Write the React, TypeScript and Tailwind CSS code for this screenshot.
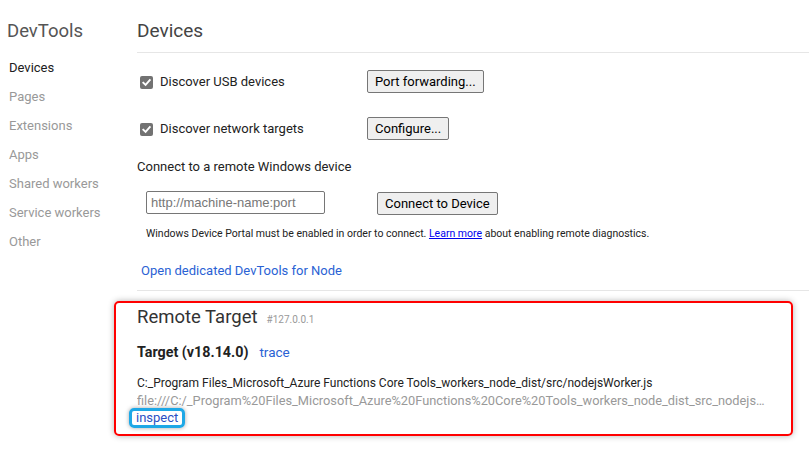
import React from "react";

const font = "font-['Segoe_UI',Roboto,sans-serif]";

function Check() {
  return (
    <span className="w-[13px] h-[13px] rounded-[2px] bg-[#727272] flex items-center justify-center shrink-0">
      <svg width="11" height="11" viewBox="0 0 12 12">
        <path d="M2.5 6.2 L5 8.6 L9.6 3.4" stroke="#fff" strokeWidth="2" fill="none" strokeLinecap="square" />
      </svg>
    </span>
  );
}

function Btn({ children }: { children: React.ReactNode }) {
  return (
    <button className="h-[23px] px-[7px] bg-[#efefef] border border-[#767676] rounded-[2px] text-[13px] leading-[21px] text-black">
      {children}
    </button>
  );
}

const sideItems = ["Pages", "Extensions", "Apps", "Shared workers", "Service workers", "Other"];

export default function App() {
  return (
    <div className={`w-[809px] h-[457px] overflow-hidden bg-white flex ${font} text-[#222]`}>
      <div className="w-[137px] shrink-0 pl-[7px] flex flex-col">
        <div className="pt-[17px] h-[53px] text-[18.5px] leading-[28px] text-[#555]">DevTools</div>
        <div className="pl-[2px] mt-[5px] text-[13px] leading-[20px] text-[#202020]">Devices</div>
        {sideItems.map((s) => (
          <div key={s} className="pl-[2px] mt-[9px] text-[13px] leading-[20px] text-[#999]">{s}</div>
        ))}
      </div>
      <div className="flex-1 min-w-0 flex flex-col">
        <div className="h-[53px] pt-[17px] border-b border-[#e6e6e6] text-[19px] leading-[28px] text-[#444]">Devices</div>
        <div className="mt-[17px] h-[23px] flex items-center">
          <div className="w-[230px] pl-[3px] pt-[1px] flex items-center gap-[7px] text-[13px]">
            <Check />
            <span>Discover USB devices</span>
          </div>
          <Btn>Port forwarding...</Btn>
        </div>
        <div className="mt-[24px] h-[23px] flex items-center">
          <div className="w-[230px] pl-[3px] pt-[1px] flex items-center gap-[7px] text-[13px]">
            <Check />
            <span>Discover network targets</span>
          </div>
          <Btn>Configure...</Btn>
        </div>
        <div className="mt-[17px] text-[13px] leading-[20px]">Connect to a remote Windows device</div>
        <div className="mt-[14px] h-[23px] flex items-center pl-[9px]">
          <input
            placeholder="http://machine-name:port"
            className="w-[179px] h-[23px] border border-[#767676] rounded-[2px] px-[4px] text-[13px] font-['Liberation_Sans',Arial,sans-serif] placeholder:text-[#777] outline-none"
          />
          <div className="ml-[52px]">
            <Btn>Connect to Device</Btn>
          </div>
        </div>
        <div className="mt-[12px] pl-[9px] text-[10.5px] leading-[16px] text-[#222]">
          Windows Device Portal must be enabled in order to connect.{" "}
          <span className="text-[#0000ee] underline">Learn more</span> about enabling remote diagnostics.
        </div>
        <div className="mt-[19px] pl-[4px] text-[13px] leading-[20px] text-[#2a62d4]">Open dedicated DevTools for Node</div>
        <div className="mt-[9px] border-t border-[#e6e6e6]" />
        <div className="mt-[10px] ml-[-23px] mr-[16px] min-w-0 border-2 border-[#ff0000] rounded-[5px] shadow-[0_0_6px_rgba(0,0,0,0.3)] pl-[21px] pr-[16px] pt-[2px] pb-[6px] flex flex-col">
          <div className="flex items-baseline">
            <span className="text-[18.5px] leading-[24px] text-[#333]">Remote Target</span>
            <span className="ml-[9px] text-[10px] text-[#999]">#127.0.0.1</span>
          </div>
          <div className="mt-[13px] flex items-center leading-[20px]">
            <span className="font-bold text-[14.3px] text-[#222]">Target (v18.14.0)</span>
            <span className="ml-[11px] text-[13.5px] text-[#2a62d4]">trace</span>
          </div>
          <div className="mt-[13px] text-[12px] leading-[17px] text-[#222] whitespace-nowrap overflow-hidden text-ellipsis">
            C:_Program Files_Microsoft_Azure Functions Core Tools_workers_node_dist/src/nodejsWorker.js
          </div>
          <div className="text-[12.8px] leading-[17px] text-[#999] whitespace-nowrap overflow-hidden text-ellipsis">
            file:///C:/_Program%20Files_Microsoft_Azure%20Functions%20Core%20Tools_workers_node_dist_src_nodejsWorker.js
          </div>
          <div className="flex">
            <span className="ml-[-8px] -mt-[1px] h-[20px] border-[3px] border-[#1ea8e6] rounded-[5px] shadow-[0_0_4px_rgba(0,0,0,0.35)] px-[4px] text-[13px] leading-[14px] text-[#2a4fc4]">
              inspect
            </span>
          </div>
        </div>
      </div>
    </div>
  );
}
